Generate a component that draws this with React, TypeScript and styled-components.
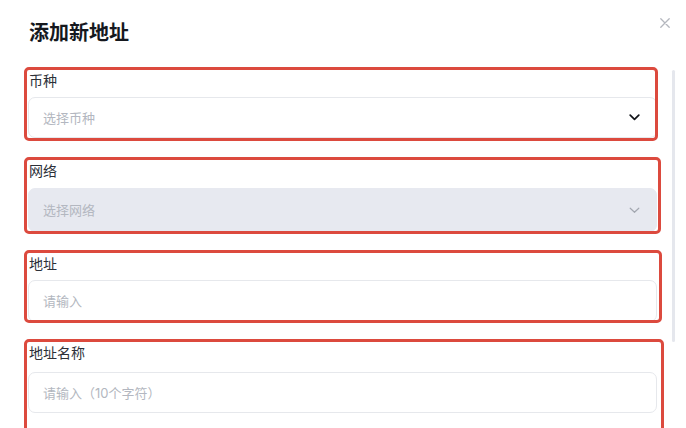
import styled, { createGlobalStyle } from "styled-components";

const GlobalStyle = createGlobalStyle`
  html, body {
    margin: 0;
    padding: 0;
    background: #ffffff;
  }
  body {
    font-family: "Inter", "Noto Sans CJK SC", sans-serif;
    overflow: hidden;
  }
`;

const Modal = styled.div`
  width: 686px;
  height: 428px;
  box-sizing: border-box;
  padding: 17px 11px 0 24px;
  background: #ffffff;
  overflow: hidden;
`;

const Header = styled.div`
  display: flex;
  justify-content: space-between;
  align-items: flex-start;
`;

const Title = styled.h2`
  margin: 2px 0 0 5px;
  font-size: 20px;
  line-height: 28px;
  font-weight: 700;
  color: #15181e;
`;

const CloseButton = styled.button`
  width: 12px;
  height: 12px;
  margin: 0 4px 0 0;
  padding: 0;
  border: none;
  background: none;
  display: flex;
  align-items: center;
  justify-content: center;
  cursor: pointer;
`;

const Body = styled.div`
  display: flex;
  align-items: flex-start;
  margin-top: 20px;
`;

const Form = styled.div`
  width: 640px;
  display: flex;
  flex-direction: column;
  gap: 16px;
`;

const FormItem = styled.div<{ $width: number; $height: number }>`
  position: relative;
  box-sizing: border-box;
  width: ${(p) => p.$width}px;
  height: ${(p) => p.$height}px;
  padding: 3px 0 0 3px;
  flex-shrink: 0;

  &::after {
    content: "";
    position: absolute;
    inset: 0;
    border: 3px solid #dc4a3e;
    border-radius: 5px;
    pointer-events: none;
  }
`;

const Label = styled.div`
  padding-left: 2px;
  font-size: 14px;
  line-height: 22px;
  color: #2c3038;
`;

const Field = styled.div<{ $gap: number; $height: number; $disabled?: boolean }>`
  box-sizing: border-box;
  width: 629px;
  height: ${(p) => p.$height}px;
  margin: ${(p) => p.$gap}px 0 0 1px;
  padding: 0 16px 0 14px;
  display: flex;
  align-items: center;
  justify-content: space-between;
  border: 1px solid ${(p) => (p.$disabled ? "#e7e9f0" : "#e6e8ec")};
  border-radius: 7px;
  background: ${(p) => (p.$disabled ? "#e7e9f0" : "#ffffff")};
`;

const Placeholder = styled.span`
  font-size: 13px;
  line-height: 18px;
  color: #b3b7c0;
`;

const Scrollbar = styled.div`
  width: 3px;
  height: 272px;
  margin: 3px 0 0 8px;
  border-radius: 2px;
  background: #e5e7ed;
`;

function Chevron({ muted }: { muted?: boolean }) {
  return (
    <svg width="11" height="7" viewBox="0 0 11 7" fill="none">
      <path
        d="M1.2 1.2L5.5 5.3L9.8 1.2"
        stroke={muted ? "#a3a7b0" : "#111318"}
        strokeWidth={muted ? 1.2 : 1.7}
        strokeLinecap="round"
        strokeLinejoin="round"
      />
    </svg>
  );
}

type FieldSpec = {
  label: string;
  placeholder: string;
  width: number;
  height: number;
  gap: number;
  fieldHeight: number;
  select?: boolean;
  disabled?: boolean;
};

const fields: FieldSpec[] = [
  { label: "币种", placeholder: "选择币种", width: 634, height: 74, gap: 5, fieldHeight: 41, select: true },
  { label: "网络", placeholder: "选择网络", width: 637, height: 77, gap: 6, fieldHeight: 44, select: true, disabled: true },
  { label: "地址", placeholder: "请输入", width: 638, height: 73, gap: 5, fieldHeight: 42 },
  { label: "地址名称", placeholder: "请输入（10个字符）", width: 640, height: 100, gap: 8, fieldHeight: 41 },
];

export default function App() {
  return (
    <>
      <GlobalStyle />
      <Modal>
        <Header>
          <Title>添加新地址</Title>
          <CloseButton aria-label="关闭">
            <svg width="10" height="10" viewBox="0 0 10 10" fill="none">
              <path d="M0.8 0.8L9.2 9.2M9.2 0.8L0.8 9.2" stroke="#b4b7be" strokeWidth="1.3" strokeLinecap="round" />
            </svg>
          </CloseButton>
        </Header>
        <Body>
          <Form>
            {fields.map((f) => (
              <FormItem key={f.label} $width={f.width} $height={f.height}>
                <Label>{f.label}</Label>
                <Field $gap={f.gap} $height={f.fieldHeight} $disabled={f.disabled}>
                  <Placeholder>{f.placeholder}</Placeholder>
                  {f.select && <Chevron muted={f.disabled} />}
                </Field>
              </FormItem>
            ))}
          </Form>
          <Scrollbar />
        </Body>
      </Modal>
    </>
  );
}
